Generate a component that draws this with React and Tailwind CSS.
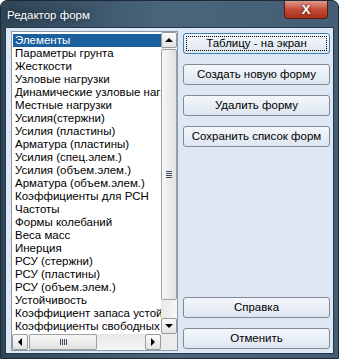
import React from "react";

const items = [
  "Элементы",
  "Параметры грунта",
  "Жесткости",
  "Узловые нагрузки",
  "Динамические узловые нагрузки",
  "Местные нагрузки",
  "Усилия(стержни)",
  "Усилия (пластины)",
  "Арматура (пластины)",
  "Усилия (спец.элем.)",
  "Усилия (объем.элем.)",
  "Арматура (объем.элем.)",
  "Коэффициенты для РСН",
  "Частоты",
  "Формы колебаний",
  "Веса масс",
  "Инерция",
  "РСУ (стержни)",
  "РСУ (пластины)",
  "РСУ (объем.элем.)",
  "Устойчивость",
  "Коэффициент запаса устойчивости",
  "Коэффициенты свободных длин",
];

const ArrowBtn = ({ dir, className = "" }) => {
  const tri = {
    up: "border-x-[4px] border-x-transparent border-b-[4px] border-b-black",
    down: "border-x-[4px] border-x-transparent border-t-[4px] border-t-black",
    left: "border-y-[4px] border-y-transparent border-r-[4px] border-r-black",
    right: "border-y-[4px] border-y-transparent border-l-[4px] border-l-black",
  }[dir];
  return (
    <div
      className={`flex items-center justify-center border border-[#9a9a9a] rounded-[2px] bg-gradient-to-b from-[#fbfbfb] to-[#e2e2e2] ${className}`}
    >
      <div className={`w-0 h-0 ${tri}`}></div>
    </div>
  );
};

const Btn = ({ children, primary }) => (
  <div
    className={`h-[21px] flex items-center justify-center rounded-[3px] border text-[11.5px] text-black bg-gradient-to-b from-[#f4f7fb] to-[#dde6f0] ${
      primary ? "border-[#3c7fb1] p-[2px]" : "border-[#7f8a96]"
    }`}
  >
    {primary ? (
      <div className="w-full h-full flex items-center justify-center border border-dotted border-black">
        {children}
      </div>
    ) : (
      children
    )}
  </div>
);

export default function App() {
  return (
    <div
      className="w-[339px] h-[359px] flex flex-col rounded-t-[7px] overflow-hidden border border-[#1d2a36] bg-gradient-to-r from-[#2f4659] via-[#4b667c] to-[#425d74]"
      style={{ fontFamily: '"Liberation Sans", Arial, sans-serif' }}
    >
      <div className="h-[26px] flex items-start shrink-0">
        <span className="ml-[6px] mt-[6px] text-[11.5px] text-white [text-shadow:0_0_6px_rgba(0,0,0,0.7)]">
          Редактор форм
        </span>
        <div className="ml-auto mr-[10px] w-[44px] h-[18px] rounded-b-[4px] border border-[#5a1a12] border-t-0 bg-gradient-to-b from-[#e19a8c] via-[#c44a34] to-[#a8321c] flex items-center justify-center text-white font-bold text-[13px] leading-none [text-shadow:0_0_3px_rgba(0,0,0,0.8)]">
          X
        </div>
      </div>
      <div className="flex-1 mx-[4px] mb-[4px] border border-[#25384a] bg-[#dde8f4] flex gap-[5px] pl-[5px] pr-[3px] pt-[3px] pb-[2px]">
        <div className="w-[167px] border border-[#8a9aac] bg-white flex flex-col overflow-hidden relative">
          <div className="flex-1 flex min-h-0">
            <div className="flex-1 overflow-hidden pt-[2px] pl-[1px] text-[11.5px] text-black">
              {items.map((t, i) => (
                <div
                  key={t}
                  className={`h-[13px] leading-[13px] pl-[2px] whitespace-nowrap ${
                    i === 0 ? "bg-[#1c5f9d] text-white" : ""
                  }`}
                >
                  {t}
                </div>
              ))}
            </div>
            <div className="w-[16px] shrink-0 flex flex-col bg-gradient-to-r from-[#e8e8e8] to-[#f6f6f6]">
              <ArrowBtn dir="up" className="h-[16px]" />
              <div className="flex-1 flex flex-col pt-[1px] pb-[18px]">
                <div className="flex-1 border border-[#a0a0a0] rounded-[2px] bg-gradient-to-r from-[#f7f7f7] to-[#e1e1e1] flex items-center justify-center">
                  <div className="flex flex-col gap-[1px]">
                    <div className="w-[6px] h-[1px] bg-[#3a4a60]"></div>
                    <div className="w-[6px] h-[1px] bg-[#3a4a60]"></div>
                    <div className="w-[6px] h-[1px] bg-[#3a4a60]"></div>
                    <div className="w-[6px] h-[1px] bg-[#3a4a60]"></div>
                  </div>
                </div>
              </div>
              <ArrowBtn dir="down" className="h-[16px]" />
            </div>
          </div>
          <div className="h-[16px] shrink-0 flex bg-gradient-to-b from-[#e8e8e8] to-[#f6f6f6]">
            <ArrowBtn dir="left" className="w-[16px]" />
            <div className="flex-1 flex pl-[1px] pr-[48px]">
              <div className="flex-1 border border-[#a0a0a0] rounded-[2px] bg-gradient-to-b from-[#f7f7f7] to-[#e1e1e1] flex items-center justify-center gap-[1px]">
                <div className="w-[1px] h-[6px] bg-[#3a4a60]"></div>
                <div className="w-[1px] h-[6px] bg-[#3a4a60]"></div>
                <div className="w-[1px] h-[6px] bg-[#3a4a60]"></div>
                <div className="w-[1px] h-[6px] bg-[#3a4a60]"></div>
              </div>
            </div>
            <ArrowBtn dir="right" className="w-[16px]" />
            <div className="w-[16px] bg-[#ececec]"></div>
          </div>
        </div>
        <div className="flex-1 flex flex-col pt-[2px] pb-[2px]">
          <div className="flex flex-col gap-[10px]">
            <Btn primary>Таблицу - на экран</Btn>
            <Btn>Создать новую форму</Btn>
            <Btn>Удалить форму</Btn>
            <Btn>Сохранить список форм</Btn>
          </div>
          <div className="mt-auto flex flex-col gap-[10px]">
            <Btn>Справка</Btn>
            <Btn>Отменить</Btn>
          </div>
        </div>
      </div>
    </div>
  );
}
